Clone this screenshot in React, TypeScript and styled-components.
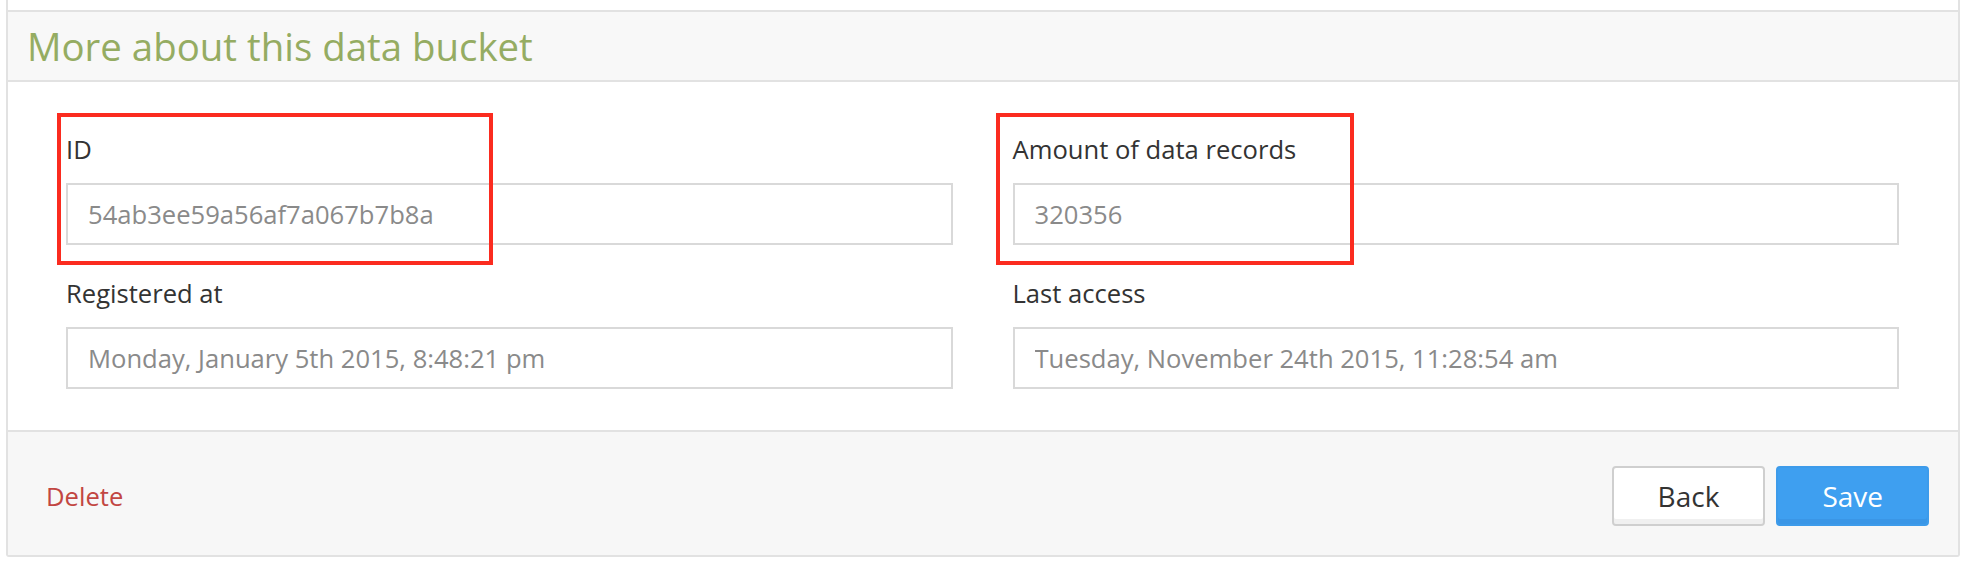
import React from "react";
import styled, { createGlobalStyle } from "styled-components";

const GlobalStyle = createGlobalStyle`
  body {
    margin: 0;
    background: #ffffff;
    font-family: "Open Sans", "Noto Sans", sans-serif;
  }
`;

const border = "#e2e2e2";

const Page = styled.div`
  padding: 0 6px;
`;

const Panel = styled.div`
  border: 2px solid ${border};
  border-top: none;
  border-radius: 0 0 3px 3px;
`;

const TopStrip = styled.div`
  height: 10px;
  background: #ffffff;
`;

const Header = styled.div`
  display: flex;
  align-items: center;
  height: 68px;
  padding-left: 19px;
  background: #f8f8f8;
  border-top: 2px solid ${border};
  border-bottom: 2px solid ${border};
`;

const Title = styled.h2`
  margin: 0;
  font-size: 38.4px;
  font-weight: 400;
  color: #95ac62;
  line-height: 1;
`;

const Body = styled.div`
  padding: 48px 59px 41px 58px;
  background: #ffffff;
`;

const FormGrid = styled.div`
  display: grid;
  grid-template-columns: 1fr 1fr;
  column-gap: 60px;
  row-gap: 29px;
`;

const Field = styled.div`
  position: relative;
  display: flex;
  flex-direction: column;
`;

const Label = styled.label`
  font-size: 25.6px;
  line-height: 39px;
  color: #333333;
  margin-bottom: 14px;
`;

const Input = styled.input`
  box-sizing: border-box;
  width: 100%;
  height: 62px;
  padding: 0 20px;
  border: 2px solid #d9d9d9;
  border-radius: 0;
  background: #ffffff;
  font-family: "Open Sans", "Noto Sans", sans-serif;
  font-size: 25.6px;
  color: #8a8a8a;
  outline: none;
`;

const Highlight = styled.div<{ $left: number; $width: number }>`
  position: absolute;
  top: -17px;
  left: ${(p) => p.$left}px;
  width: ${(p) => p.$width}px;
  height: 152px;
  box-sizing: border-box;
  border: 4px solid #fb2b1f;
  pointer-events: none;
`;

const Footer = styled.div`
  display: flex;
  align-items: center;
  justify-content: space-between;
  height: 125px;
  box-sizing: border-box;
  padding: 5px 29px 0 38px;
  background: #f7f7f7;
  border-top: 2px solid ${border};
`;

const DeleteLink = styled.a`
  font-size: 25.6px;
  color: #c24642;
  text-decoration: none;
  cursor: pointer;
`;

const Actions = styled.div`
  display: flex;
  gap: 11px;
`;

const Button = styled.button<{ $primary?: boolean }>`
  box-sizing: border-box;
  height: 60px;
  padding: 0 44px;
  border-radius: 4px;
  font-family: "Open Sans", "Noto Sans", sans-serif;
  font-size: 28px;
  cursor: pointer;
  border: 2px solid ${(p) => (p.$primary ? "#3d9bea" : "#cfcfcf")};
  background: ${(p) => (p.$primary ? "#3e9ff0" : "#ffffff")};
  color: ${(p) => (p.$primary ? "#ffffff" : "#333333")};
  box-shadow: inset 0 -5px 0 ${(p) => (p.$primary ? "#3a96e6" : "#f0f0f0")};
`;

const fields = [
  { label: "ID", value: "54ab3ee59a56af7a067b7b8a", mark: { left: -9, width: 436 } },
  { label: "Amount of data records", value: "320356", mark: { left: -17, width: 358 } },
  { label: "Registered at", value: "Monday, January 5th 2015, 8:48:21 pm" },
  { label: "Last access", value: "Tuesday, November 24th 2015, 11:28:54 am" },
];

export default function App() {
  return (
    <Page>
      <GlobalStyle />
      <Panel>
        <TopStrip />
        <Header>
          <Title>More about this data bucket</Title>
        </Header>
        <Body>
          <FormGrid>
            {fields.map((f) => (
              <Field key={f.label}>
                <Label>{f.label}</Label>
                <Input readOnly value={f.value} />
                {f.mark && <Highlight $left={f.mark.left} $width={f.mark.width} />}
              </Field>
            ))}
          </FormGrid>
        </Body>
        <Footer>
          <DeleteLink>Delete</DeleteLink>
          <Actions>
            <Button>Back</Button>
            <Button $primary>Save</Button>
          </Actions>
        </Footer>
      </Panel>
    </Page>
  );
}
